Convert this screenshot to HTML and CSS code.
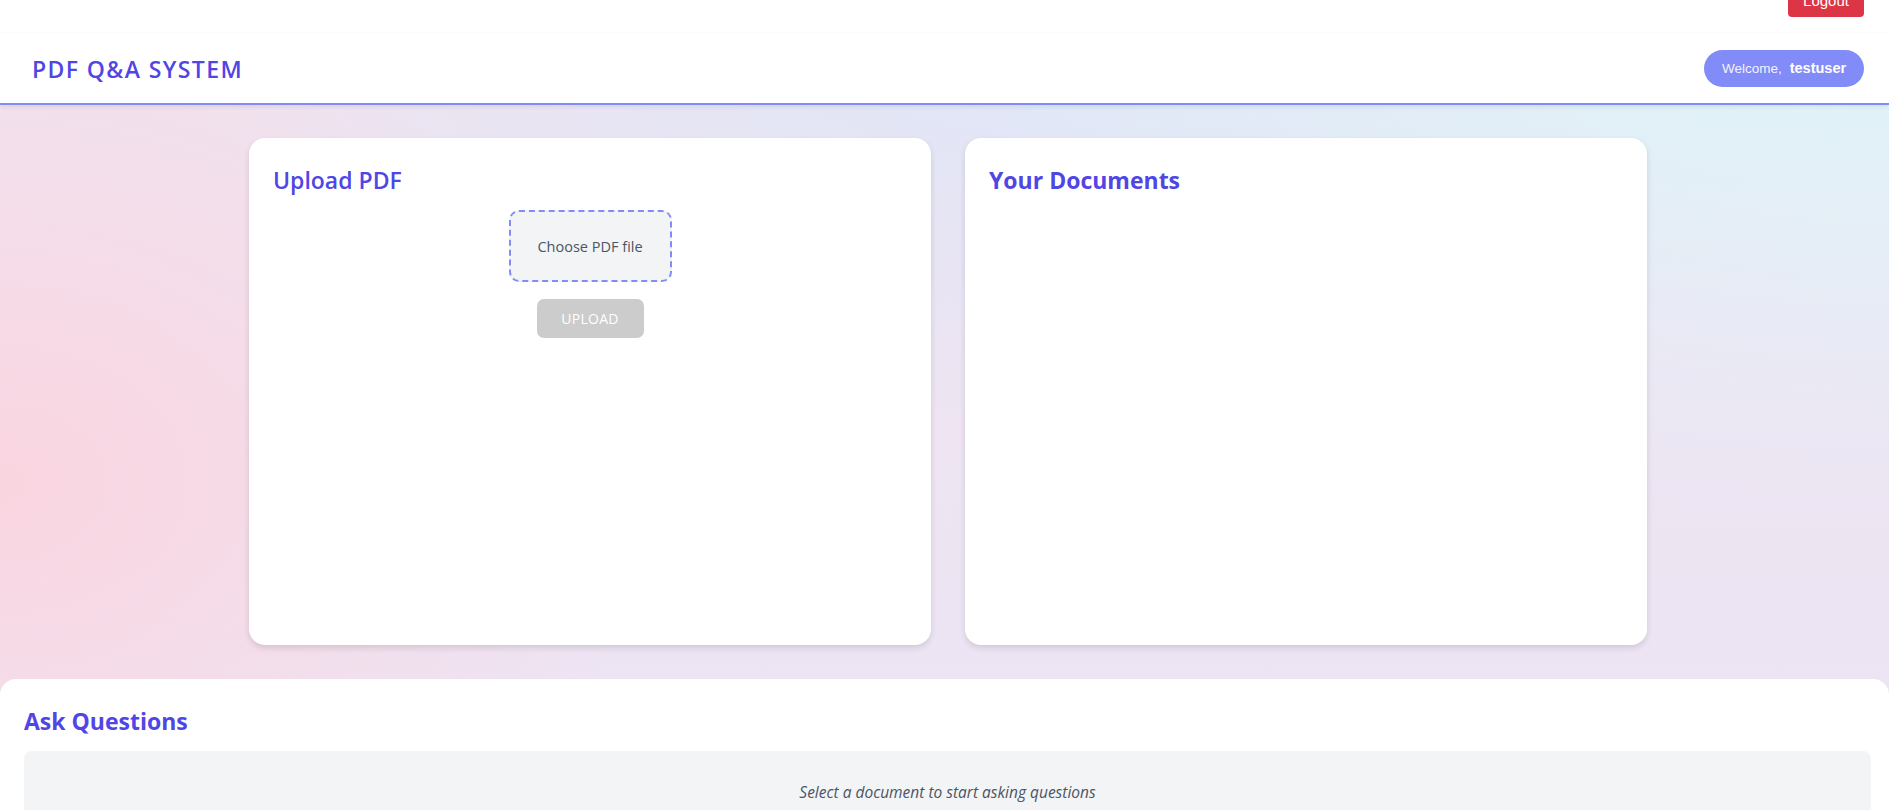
FILE: index.html
```html
<!DOCTYPE html>
<html lang="en">
<head>
<meta charset="utf-8">
<title>PDF Q&amp;A System</title>
<link rel="stylesheet" href="styles.css">
</head>
<body>
<div class="topbar">
  <button class="logout">Logout</button>
</div>
<header class="header">
  <h1 class="brand">PDF Q&amp;A SYSTEM</h1>
  <div class="welcome">Welcome, <strong>testuser</strong></div>
</header>
<main class="main">
  <div class="cards">
    <section class="card">
      <h2 class="card-title semi">Upload PDF</h2>
      <div class="upload-area">
        <label class="file-box">Choose PDF file</label>
        <button class="upload-btn" disabled>UPLOAD</button>
      </div>
    </section>
    <section class="card">
      <h2 class="card-title">Your Documents</h2>
    </section>
  </div>
  <section class="ask">
    <h2 class="card-title">Ask Questions</h2>
    <div class="ask-box">
      <p class="hint">Select a document to start asking questions</p>
    </div>
  </section>
</main>
</body>
</html>
```

FILE: styles.css
```css
* { box-sizing: border-box; }
html, body { margin: 0; padding: 0; }
body {
  font-family: "Open Sans", "Noto Sans", sans-serif;
  background-color: #ede6f5;
  background-image:
    radial-gradient(ellipse 650px 480px at 0% 55%, rgba(250, 213, 224, 1), rgba(250, 213, 224, 0) 100%),
    radial-gradient(ellipse 950px 520px at 100% 0%, rgba(220, 246, 250, 1), rgba(220, 246, 250, 0) 100%),
    radial-gradient(ellipse 850px 420px at 55% 0%, rgba(221, 231, 249, 1), rgba(221, 231, 249, 0) 100%),
    linear-gradient(180deg, #f0e3ef 0%, #ece5f5 100%);
  min-height: 810px;
  overflow: hidden;
}
.topbar {
  height: 33px;
  background: #fff;
  display: flex;
  justify-content: flex-end;
  align-items: flex-start;
  padding-right: 25px;
}
.logout {
  margin-top: -17px;
  height: 34px;
  width: 76px;
  background: #dc3545;
  color: #fff;
  border: none;
  border-radius: 4px;
  font-family: "Liberation Sans", Arial, sans-serif;
  font-size: 15px;
  padding: 0;
}
.header {
  height: 72px;
  background: #fff;
  border-bottom: 2px solid #818cf8;
  box-shadow: 0 2px 5px rgba(0, 0, 0, 0.08);
  display: flex;
  align-items: center;
  justify-content: space-between;
  padding: 0 25px 2px 32px;
  position: relative;
}
.brand {
  margin: 4px 0 0;
  font-size: 23px;
  font-weight: 600;
  letter-spacing: 1.4px;
  color: #4f46e5;
}
.welcome {
  background: #818cf8;
  color: rgba(255, 255, 255, 0.92);
  border-radius: 20px;
  height: 37px;
  width: 160px;
  display: flex;
  align-items: center;
  justify-content: center;
  gap: 8px;
  font-family: "Liberation Sans", Arial, sans-serif;
  font-size: 13.5px;
  margin-top: 2px;
}
.welcome strong { font-size: 14.5px; color: #fff; }
.main { padding-top: 33px; }
.cards {
  display: grid;
  grid-template-columns: 682px 682px;
  gap: 34px;
  width: 1398px;
  margin: 0 0 34px 249px;
}
.card {
  background: #fff;
  border-radius: 16px;
  height: 507px;
  padding: 27px 24px 24px;
  box-shadow: 0 3px 6px rgba(0, 0, 0, 0.12);
}
.card-title {
  margin: 0;
  font-size: 23px;
  font-weight: 700;
  line-height: 30px;
  color: #4f46e5;
}
.card-title.semi { font-weight: 600; }
.upload-area {
  display: flex;
  flex-direction: column;
  align-items: center;
  margin-top: 15px;
  gap: 17px;
}
.file-box {
  width: 163px;
  height: 72px;
  border: 2px dashed #818cf8;
  border-radius: 10px;
  background: #f3f4f6;
  color: #4b5563;
  font-size: 14.5px;
  display: flex;
  align-items: center;
  justify-content: center;
}
.upload-btn {
  width: 107px;
  height: 39px;
  border: none;
  border-radius: 7px;
  background: #cccccc;
  color: #fff;
  font-family: "Open Sans", sans-serif;
  font-size: 14px;
  font-weight: 500;
  letter-spacing: 0.3px;
  padding: 0;
}
.ask {
  background: #fff;
  border-radius: 16px 16px 0 0;
  padding: 27px 18px 24px 24px;
  min-height: 200px;
}
.ask-box {
  margin-top: 15px;
  background: #f3f4f6;
  border-radius: 8px;
  padding: 30px 20px;
  text-align: center;
}
.hint {
  margin: 0;
  font-style: italic;
  font-size: 15.5px;
  color: #4b5563;
}
```
